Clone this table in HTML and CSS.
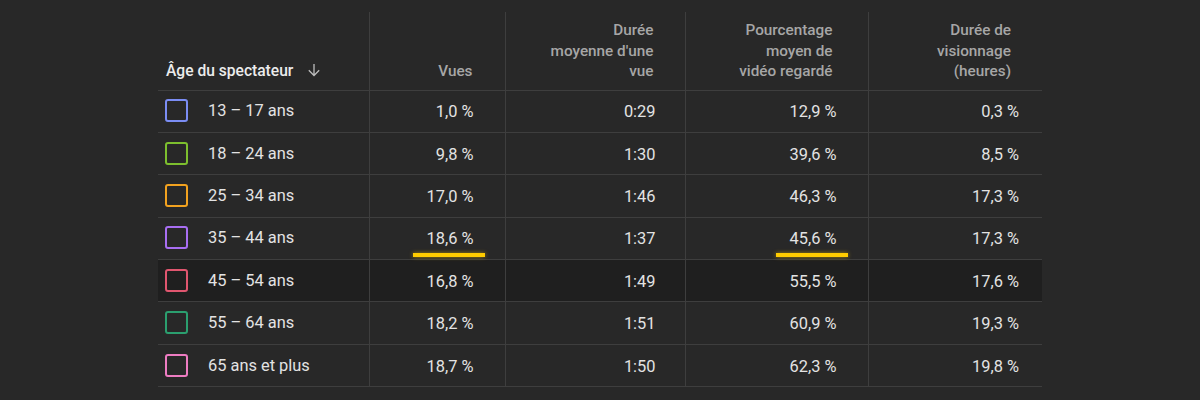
FILE: index.html
```html
<!DOCTYPE html>
<html lang="fr">
<head>
<meta charset="utf-8">
<link rel="stylesheet" href="styles.css">
</head>
<body>
<div class="page">
  <table class="stats">
    <colgroup>
      <col class="c1"><col class="c2"><col class="c3"><col class="c4"><col class="c5">
    </colgroup>
    <thead>
      <tr>
        <th class="h-age"><span class="age-title">Âge du spectateur</span>
          <svg class="sort" width="14" height="14" viewBox="0 0 14 14"><path d="M7 1v11.5M1.8 7.3 7 12.5l5.2-5.2" fill="none" stroke="#bdbdbd" stroke-width="1.3"/></svg>
        </th>
        <th class="h2">Vues</th>
        <th class="h3">Durée<br>moyenne d'une<br>vue</th>
        <th class="h4">Pourcentage<br>moyen de<br>vidéo regardé</th>
        <th class="h5">Durée de<br>visionnage<br>(heures)</th>
      </tr>
    </thead>
    <tbody>
      <tr><td><span class="box b1"></span>13 – 17 ans</td><td>1,0 %</td><td>0:29</td><td>12,9 %</td><td>0,3 %</td></tr>
      <tr><td><span class="box b2"></span>18 – 24 ans</td><td>9,8 %</td><td>1:30</td><td>39,6 %</td><td>8,5 %</td></tr>
      <tr><td><span class="box b3"></span>25 – 34 ans</td><td>17,0 %</td><td>1:46</td><td>46,3 %</td><td>17,3 %</td></tr>
      <tr><td><span class="box b4"></span>35 – 44 ans</td><td><span class="mark">18,6 %</span></td><td>1:37</td><td><span class="mark">45,6 %</span></td><td>17,3 %</td></tr>
      <tr class="hover"><td><span class="box b5"></span>45 – 54 ans</td><td>16,8 %</td><td>1:49</td><td>55,5 %</td><td>17,6 %</td></tr>
      <tr><td><span class="box b6"></span>55 – 64 ans</td><td>18,2 %</td><td>1:51</td><td>60,9 %</td><td>19,3 %</td></tr>
      <tr><td><span class="box b7"></span>65 ans et plus</td><td>18,7 %</td><td>1:50</td><td>62,3 %</td><td>19,8 %</td></tr>
    </tbody>
  </table>
</div>
</body>
</html>
```
FILE: styles.css
```css
html, body {
  margin: 0;
  padding: 0;
  background: #282828;
}
body {
  width: 1200px;
  height: 400px;
  overflow: hidden;
  font-family: Roboto, "Liberation Sans", sans-serif;
}
.page {
  padding: 12px 0 0 158px;
}
.stats {
  border-collapse: collapse;
  table-layout: fixed;
  width: 884px;
}
.c1 { width: 211px; }
.c2 { width: 136px; }
.c3 { width: 180px; }
.c4 { width: 183px; }
.c5 { width: 174px; }

.stats th {
  height: 78px;
  vertical-align: bottom;
  text-align: right;
  font-weight: 500;
  font-size: 15.3px;
  line-height: 20.5px;
  color: #a6a6a6;
  padding: 0 32px 8px 0;
  border-bottom: 1px solid #3e3e3e;
  border-left: 1px solid #3e3e3e;
  box-sizing: border-box;
}
.stats th.h-age {
  text-align: left;
  border-left: none;
  padding: 0 0 8px 8px;
  color: #ececec;
  font-weight: 500;
  font-size: 15.6px;
}
.age-title { vertical-align: middle; }
.sort {
  vertical-align: middle;
  margin-left: 10px;
  position: relative;
  top: -1px;
}
.stats th.h3 { padding-right: 31px; }
.stats th.h4 { padding-right: 35px; }
.stats th.h5 { padding-right: 31px; }

.stats td {
  height: 42.4px;
  box-sizing: border-box;
  padding: 1px 31px 0 0;
  text-align: right;
  font-size: 16.4px;
  color: #e3e3e3;
  border-bottom: 1px solid #3e3e3e;
  border-left: 1px solid #3e3e3e;
  white-space: nowrap;
}
.stats td:first-child {
  border-left: none;
  text-align: left;
  padding-left: 7px;
}
.stats td:nth-child(3) { padding-right: 29px; }
.stats td:nth-child(4) { padding-right: 31px; }
.stats td:nth-child(5) { padding-right: 23px; }

.stats tr.hover td { background: #1f1f1f; }

.box {
  display: inline-block;
  width: 23px;
  height: 23px;
  box-sizing: border-box;
  border: 2.5px solid;
  border-radius: 3px;
  margin-right: 20px;
  vertical-align: middle;
  position: relative;
  top: -1px;
}
.b1 { border-color: #7b8df4; }
.b2 { border-color: #7dbf2e; }
.b3 { border-color: #f2a21f; }
.b4 { border-color: #a86ef2; }
.b5 { border-color: #e0566f; }
.b6 { border-color: #2b9f6f; }
.b7 { border-color: #ee7cc2; }

.mark {
  position: relative;
  display: inline-block;
}
.mark::after {
  content: "";
  position: absolute;
  left: -14px;
  right: -11px;
  bottom: -9px;
  height: 4px;
  background: #ffcc00;
  box-shadow: 0 0 4px rgba(255, 204, 0, 0.55);
}
```
